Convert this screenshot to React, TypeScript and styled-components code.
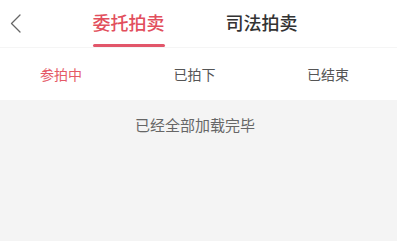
import React, { useState } from 'react';
import styled, { createGlobalStyle } from 'styled-components';

const GlobalStyle = createGlobalStyle`
  html, body {
    margin: 0;
    padding: 0;
    background: #ffffff;
  }
  body {
    font-family: "Noto Sans CJK SC", "Noto Sans", sans-serif;
  }
`;

const Page = styled.div`
  width: 397px;
  height: 241px;
  display: flex;
  flex-direction: column;
  overflow: hidden;
`;

const Header = styled.div`
  height: 47px;
  display: grid;
  grid-template-columns: 1fr auto 1fr;
  border-bottom: 1px solid #f5f5f5;
`;

const BackButton = styled.div`
  display: flex;
  align-items: flex-start;
  padding: 14px 0 0 10px;
`;

const TabBar = styled.div`
  display: flex;
  gap: 61px;
  margin-right: 7px;
`;

const Tab = styled.div<{ $active: boolean }>`
  display: flex;
  flex-direction: column;
  align-items: stretch;
  padding-top: 12px;
  font-size: 18px;
  font-weight: 500;
  line-height: 20px;
  color: ${(p) => (p.$active ? '#e24f5d' : '#333333')};
  cursor: pointer;
`;

const Underline = styled.div<{ $active: boolean }>`
  margin-top: 12px;
  height: 3px;
  border-radius: 2px;
  background: ${(p) => (p.$active ? '#e2566a' : 'transparent')};
`;

const SubTabs = styled.div`
  height: 52px;
  display: flex;
  align-items: center;
  justify-content: space-between;
  padding: 0 48px 0 40px;
`;

const SubTab = styled.div<{ $active: boolean }>`
  font-size: 14px;
  line-height: 20px;
  color: ${(p) => (p.$active ? '#e55a66' : '#555555')};
  cursor: pointer;
`;

const ListArea = styled.div`
  flex: 1;
  background: #f4f4f4;
  padding: 15px 7px 0 0;
  text-align: center;
`;

const Finished = styled.div`
  font-size: 15px;
  line-height: 20px;
  color: #666666;
`;

const tabs = ['委托拍卖', '司法拍卖'];
const subTabs = ['参拍中', '已拍下', '已结束'];

export default function App() {
  const [tab, setTab] = useState(0);
  const [sub, setSub] = useState(0);

  return (
    <>
      <GlobalStyle />
      <Page>
        <Header>
          <BackButton>
            <svg width="12" height="20" viewBox="0 0 12 20" fill="none">
              <polyline
                points="10,1 1.5,9.5 10,18"
                stroke="#666666"
                strokeWidth="1.3"
                strokeLinecap="round"
                strokeLinejoin="round"
              />
            </svg>
          </BackButton>
          <TabBar>
            {tabs.map((t, i) => (
              <Tab key={t} $active={tab === i} onClick={() => setTab(i)}>
                {t}
                <Underline $active={tab === i} />
              </Tab>
            ))}
          </TabBar>
          <div />
        </Header>
        <SubTabs>
          {subTabs.map((s, i) => (
            <SubTab key={s} $active={sub === i} onClick={() => setSub(i)}>
              {s}
            </SubTab>
          ))}
        </SubTabs>
        <ListArea>
          <Finished>已经全部加载完毕</Finished>
        </ListArea>
      </Page>
    </>
  );
}
